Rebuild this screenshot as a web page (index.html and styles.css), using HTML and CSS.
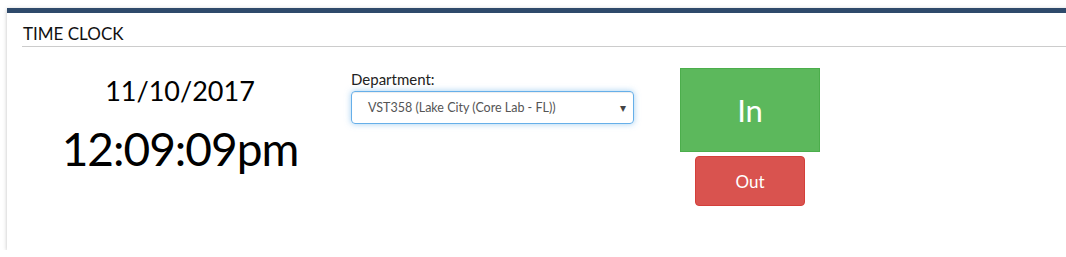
FILE: index.html
```html
<!DOCTYPE html>
<html>
<head>
<meta charset="utf-8">
<link rel="stylesheet" href="styles.css">
</head>
<body>
<div class="card">
  <div class="card-head"><h2 class="title">TIME CLOCK</h2></div>
  <div class="card-body">
    <div class="clock">
      <div class="date">11/10/2017</div>
      <div class="time">12:09:09pm</div>
    </div>
    <div class="dept">
      <label class="dept-label">Department:</label>
      <div class="select">
        <span class="select-text">VST358 (Lake City (Core Lab - FL))</span>
        <span class="caret">&#9662;</span>
      </div>
    </div>
    <div class="buttons">
      <button class="btn btn-in">In</button>
      <button class="btn btn-out">Out</button>
    </div>
  </div>
</div>
</body>
</html>
```
FILE: styles.css
```css
html, body { margin: 0; padding: 0; background: #fff; }
body { font-family: Lato, "Open Sans", sans-serif; color: #000; overflow: hidden; }
.card {
  margin: 8px -20px 0 7px;
  border-top: 5px solid #2f4a6b;
  background: #fff;
  box-shadow: 0 1px 4px rgba(0,0,0,0.25);
  height: 242px;
  box-sizing: border-box;
}
.card-head { padding: 0 0 0 15px; }
.title {
  margin: 0;
  font-weight: 400;
  font-size: 17px;
  line-height: 20px;
  padding: 11px 0 2px 1px;
  border-bottom: 1px solid #ccc;
  color: #111;
}
.card-body { display: flex; padding: 0 0 0 15px; }
.clock { width: 316px; text-align: center; padding-top: 27px; }
.date { font-size: 27px; line-height: 33px; }
.time { font-size: 46px; line-height: 60px; letter-spacing: -1px; margin-top: 12px; }
.dept { margin-left: 13px; padding-top: 22px; }
.dept-label { display: block; font-size: 15px; line-height: 20px; color: #222; margin-bottom: 2px; }
.select {
  width: 283px; height: 33px; box-sizing: border-box;
  border: 1px solid #66afe9; border-radius: 4px;
  box-shadow: inset 0 1px 1px rgba(0,0,0,.075), 0 0 6px rgba(102,175,233,.6);
  display: flex; align-items: center; justify-content: space-between;
  padding: 0 7px 0 16px;
  font-size: 12.5px; color: #555;
}
.caret { font-size: 12px; color: #444; }
.buttons { margin-left: 46px; padding-top: 21px; display: flex; flex-direction: column; align-items: center; width: 140px; }
.btn { font-family: inherit; color: #fff; cursor: pointer; }
.btn-in {
  width: 140px; height: 84px; background: #5cb85c; border: 1px solid #4cae4c;
  font-size: 31px; border-radius: 0;
}
.btn-out {
  margin-top: 4px; width: 110px; height: 50px; background: #d9534f; border: 1px solid #d43f3a;
  border-radius: 4px; font-size: 17px;
}
```
